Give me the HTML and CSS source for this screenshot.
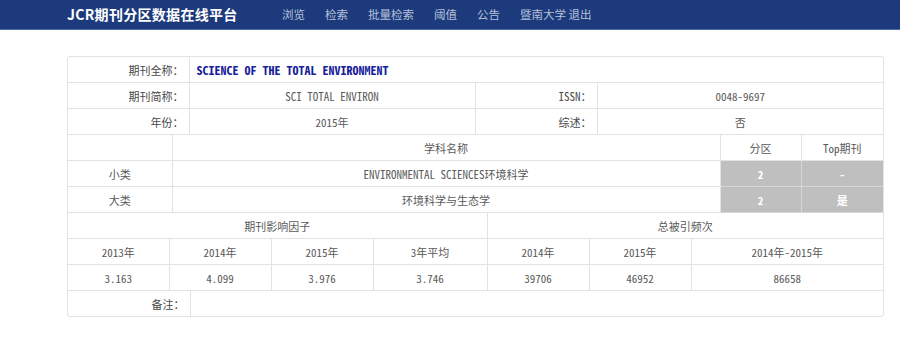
FILE: index.html
```html
<!DOCTYPE html>
<html lang="zh-CN">
<head>
<meta charset="utf-8">
<title>JCR期刊分区数据在线平台</title>
<link rel="stylesheet" href="styles.css">
</head>
<body>
<header class="nav">
  <div class="nav-inner">
    <div class="brand">JCR期刊分区数据在线平台</div>
    <ul class="links">
      <li>浏览</li>
      <li>检索</li>
      <li>批量检索</li>
      <li>阈值</li>
      <li>公告</li>
      <li>暨南大学 退出</li>
    </ul>
  </div>
</header>

<main class="panel">
  <table class="t t1">
    <colgroup><col class="c121"><col class="c286"><col class="c122"><col class="c286"></colgroup>
    <tr>
      <td class="lbl">期刊全称：</td>
      <td colspan="3" class="full">SCIENCE OF THE TOTAL ENVIRONMENT</td>
    </tr>
    <tr>
      <td class="lbl">期刊简称：</td>
      <td>SCI TOTAL ENVIRON</td>
      <td class="lbl">ISSN：</td>
      <td>0048-9697</td>
    </tr>
    <tr>
      <td class="lbl">年份：</td>
      <td>2015年</td>
      <td class="lbl">综述：</td>
      <td>否</td>
    </tr>
  </table>

  <table class="t t2">
    <colgroup><col class="c104"><col class="c548"><col class="c81"><col class="c82"></colgroup>
    <tr>
      <td></td>
      <td>学科名称</td>
      <td>分区</td>
      <td>Top期刊</td>
    </tr>
    <tr>
      <td>小类</td>
      <td>ENVIRONMENTAL SCIENCES环境科学</td>
      <td class="zone">2</td>
      <td class="zone">-</td>
    </tr>
    <tr>
      <td>大类</td>
      <td>环境科学与生态学</td>
      <td class="zone">2</td>
      <td class="zone">是</td>
    </tr>
  </table>

  <table class="t t3">
    <colgroup><col class="c101"><col class="c102"><col class="c102"><col class="c114"><col class="c102"><col class="c102"><col class="c192"></colgroup>
    <tr>
      <td colspan="4">期刊影响因子</td>
      <td colspan="3">总被引频次</td>
    </tr>
    <tr>
      <td>2013年</td>
      <td>2014年</td>
      <td>2015年</td>
      <td>3年平均</td>
      <td>2014年</td>
      <td>2015年</td>
      <td>2014年-2015年</td>
    </tr>
    <tr>
      <td>3.163</td>
      <td>4.099</td>
      <td>3.976</td>
      <td>3.746</td>
      <td>39706</td>
      <td>46952</td>
      <td>86658</td>
    </tr>
  </table>

  <table class="t t4">
    <colgroup><col class="c122"><col class="c693"></colgroup>
    <tr>
      <td class="lbl">备注：</td>
      <td></td>
    </tr>
  </table>
</main>
</body>
</html>
```
FILE: styles.css
```css
html, body {
  margin: 0;
  padding: 0;
  background: #fff;
}

.nav {
  height: 29px;
  background: #1c3a7c;
  border-bottom: 1px solid #4d6aa6;
}

.nav-inner {
  display: flex;
  align-items: center;
  height: 29px;
  padding-left: 67px;
}

.brand {
  width: 205px;
  color: #fff;
  font-family: "Noto Sans CJK SC", "Liberation Sans", sans-serif;
  font-weight: 700;
  font-size: 14px;
  letter-spacing: 0.3px;
  line-height: 29px;
}

.links {
  display: flex;
  margin: 0;
  padding: 0;
  list-style: none;
}

.links li {
  padding: 0 10px;
  color: #b6c1da;
  font-family: "Noto Sans CJK SC", "Liberation Sans", sans-serif;
  font-size: 11.5px;
  line-height: 29px;
}

.panel {
  width: 817px;
  margin: 26px 0 0 67px;
  border: 1px solid #e3e3e3;
  border-radius: 3px;
  box-shadow: 0 1px 1px rgba(0, 0, 0, 0.05);
  box-sizing: border-box;
  overflow: hidden;
}

.t {
  width: 100%;
  border-collapse: collapse;
  table-layout: fixed;
  font-family: "Noto Sans Mono CJK SC", "Liberation Mono", "Noto Sans CJK SC", monospace;
  font-size: 11px;
  color: #595959;
}

.t td {
  height: 25px;
  padding: 0 5px;
  border: 1px solid #e2e2e2;
  text-align: center;
  vertical-align: middle;
  white-space: nowrap;
  overflow: hidden;
}

.t tr:first-child td { border-top: 0; }
.t td:first-child { border-left: 0; }
.t td:last-child { border-right: 0; }
.t4 tr:last-child td { border-bottom: 0; }

.t td.lbl {
  text-align: right;
  color: #474747;
}

.t td.full {
  text-align: left;
  padding-left: 7px;
  color: #16209a;
  font-weight: 700;
  font-size: 12px;
}

.t td.zone {
  background: #bfbfbf;
  color: #fff;
  font-weight: 700;
  border-color: #d6d6d6;
}

.c121 { width: 121px; }
.c122 { width: 122px; }
.c286 { width: 286px; }
.c104 { width: 104px; }
.c548 { width: 548px; }
.c81 { width: 81px; }
.c82 { width: 82px; }
.c101 { width: 101px; }
.c102 { width: 102px; }
.c114 { width: 114px; }
.c192 { width: 192px; }
.c693 { width: 693px; }
```
